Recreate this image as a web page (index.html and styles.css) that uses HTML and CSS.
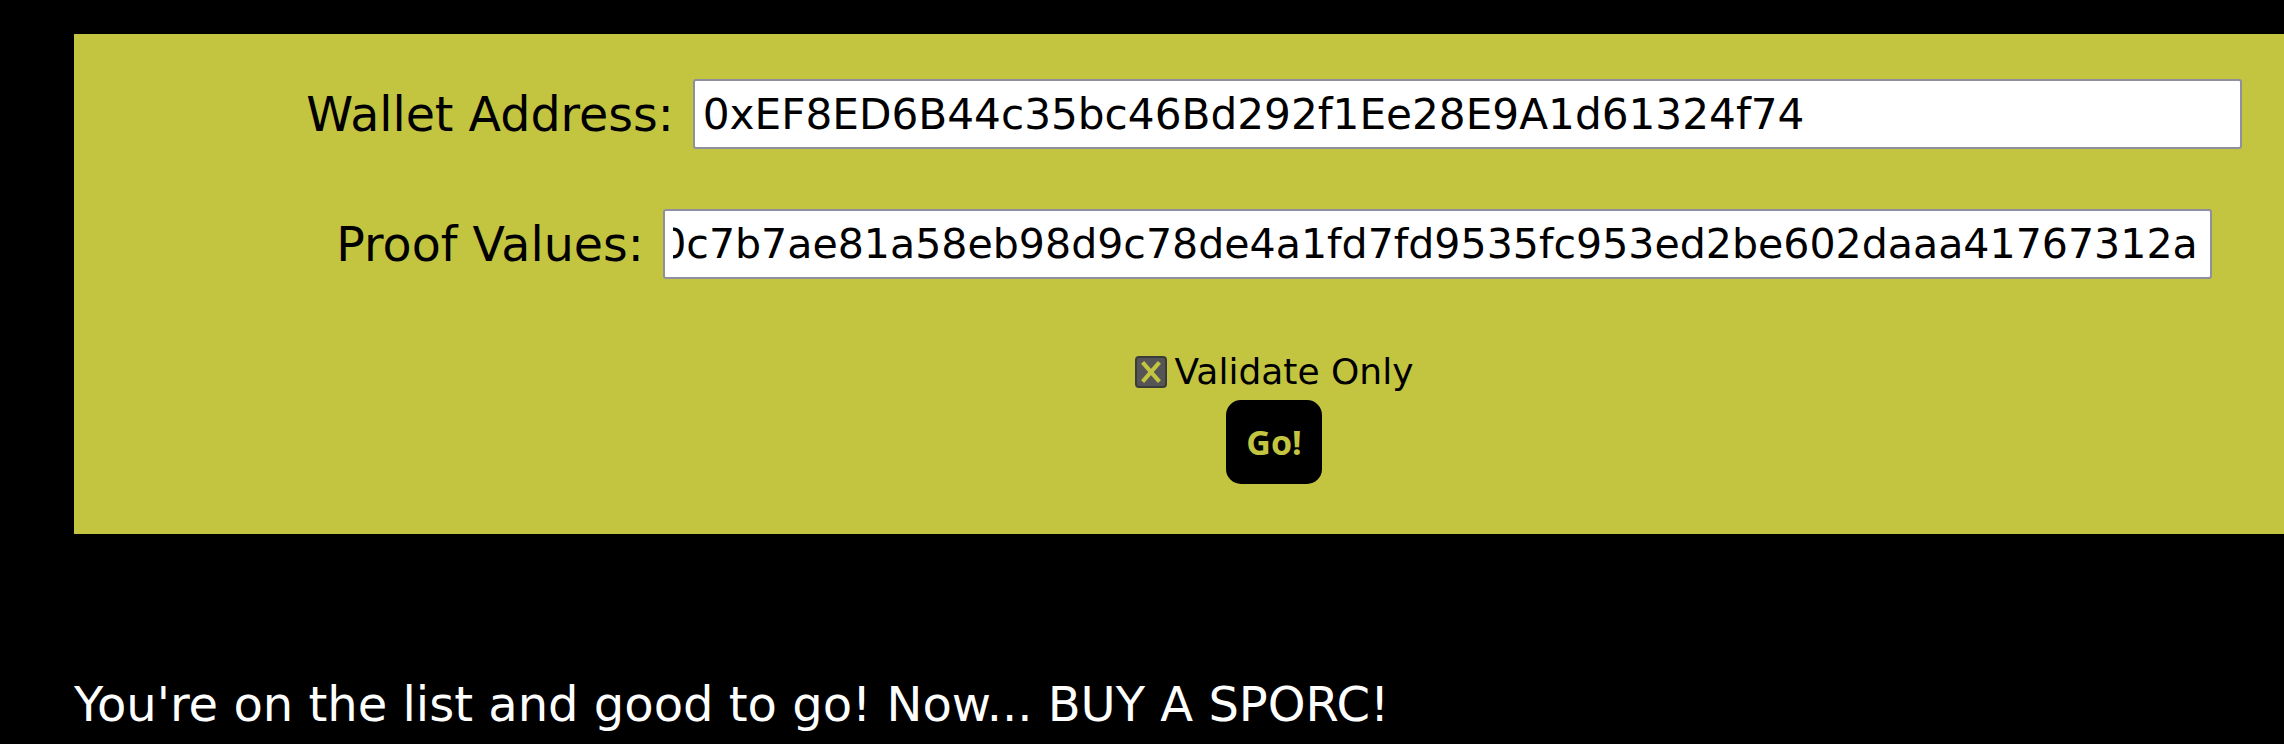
FILE: index.html
```html
<!DOCTYPE html>
<html lang="en">
<head>
  <meta charset="UTF-8">
  <meta name="viewport" content="width=device-width, initial-scale=1">
  <title>SPORC Allowlist Check</title>
  <link rel="stylesheet" href="styles.css">
</head>
<body>

  <div class="panel">
    <div class="field">
      <label for="wallet">Wallet Address:</label>
      <input type="text" id="wallet" value="0xEF8ED6B44c35bc46Bd292f1Ee28E9A1d61324f74" />
    </div>
    <div class="field field-proof">
      <label for="proof">Proof Values:</label>
      <input type="text" id="proof" dir="rtl" value="0x9f20c7b7ae81a58eb98d9c78de4a1fd7fd9535fc953ed2be602daaa41767312a" />
    </div>
    <label class="check">
      <span class="box">
        <svg viewBox="0 0 20 20" width="24" height="24">
          <path d="M3 2 L17 18 M17 2 L3 18" stroke="#c3c440" stroke-width="3.4" fill="none" />
        </svg>
      </span>
      Validate Only
    </label>
    <button class="go">Go!</button>
  </div>

  <p class="message">You're on the list and good to go! Now... BUY A SPORC!</p>

</body>
</html>
```

FILE: styles.css
```css
body {
  margin: 0;
  background: #000;
  color: #fff;
  font-family: "DejaVu Sans", sans-serif;
  overflow: hidden;
}
.panel {
  margin: 34px 0 0 74px;
  width: 2400px;
  height: 500px;
  box-sizing: border-box;
  padding-top: 45px;
  background: #c3c440;
  color: #000;
  display: flex;
  flex-direction: column;
  align-items: center;
}
.field {
  display: flex;
  align-items: center;
  gap: 19px;
  height: 70px;
}
.field label {
  font-size: 47.5px;
}
.field-proof {
  margin-top: 60px;
}
.field input {
  width: 1549px;
  height: 70px;
  box-sizing: border-box;
  padding: 0 12px 0 8px;
  border: 2px solid #8f8f9d;
  border-radius: 3px;
  background: #fff;
  color: #000;
  font-family: "DejaVu Sans", sans-serif;
  font-size: 42.2px;
  outline: none;
}
.field-proof input {
  font-size: 41.1px;
}
.check {
  margin-top: 73px;
  display: flex;
  align-items: center;
  gap: 8px;
  font-size: 36px;
  line-height: 40px;
}
.box {
  width: 32px;
  height: 32px;
  box-sizing: border-box;
  background: #555;
  border: 2px solid #3b3b3b;
  border-radius: 4px;
  display: flex;
  align-items: center;
  justify-content: center;
}
.go {
  margin-top: 8px;
  width: 96px;
  height: 84px;
  border: none;
  border-radius: 15px;
  background: #000;
  color: #c3c440;
  font-family: "Open Sans", sans-serif;
  font-weight: 700;
  font-size: 34px;
  cursor: pointer;
  padding: 0;
}
.message {
  margin: 142px 0 0 74px;
  font-size: 48px;
}
```
